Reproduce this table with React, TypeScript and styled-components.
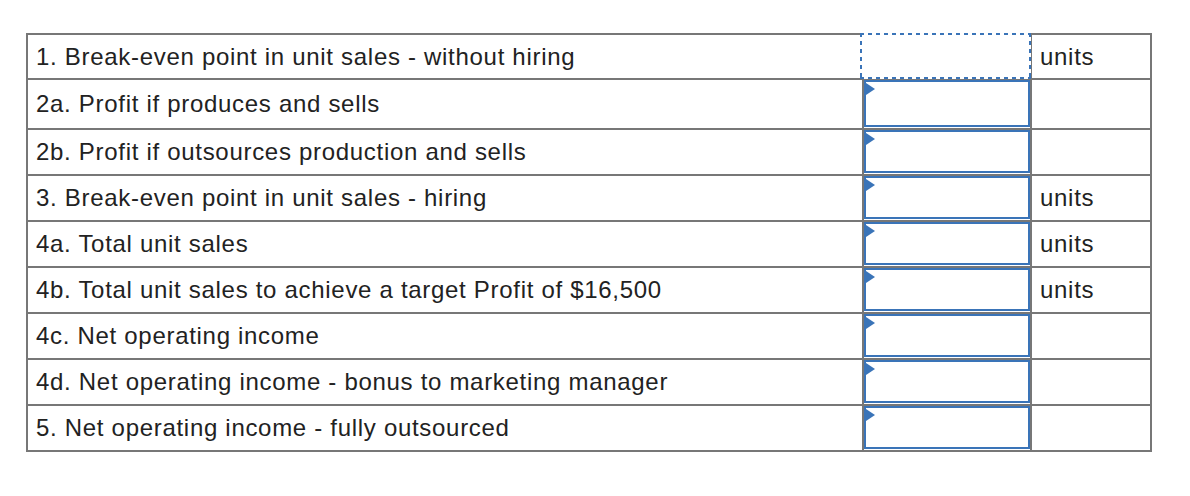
import styled, { createGlobalStyle } from 'styled-components';

const GlobalStyle = createGlobalStyle`
  body {
    margin: 0;
    background: #fff;
    font-family: "Liberation Sans", Arial, sans-serif;
  }
`;

const GRID = '#777777';
const BLUE = '#3a74b8';

interface Row {
  label: string;
  unit?: string;
  height: number; // inner height of the row, without the divider
  focused?: boolean;
}

const rows: Row[] = [
  { label: '1. Break-even point in unit sales - without hiring', unit: 'units', height: 43, focused: true },
  { label: '2a. Profit if produces and sells', height: 48 },
  { label: '2b. Profit if outsources production and sells', height: 44 },
  { label: '3. Break-even point in unit sales - hiring', unit: 'units', height: 44 },
  { label: '4a. Total unit sales', unit: 'units', height: 44 },
  { label: '4b. Total unit sales to achieve a target Profit of $16,500', unit: 'units', height: 44 },
  { label: '4c. Net operating income', height: 44 },
  { label: '4d. Net operating income - bonus to marketing manager', height: 44 },
  { label: '5. Net operating income - fully outsourced', height: 44 },
];

const Page = styled.div`
  padding: 33px 0 0 26px;
`;

const Table = styled.table`
  border-collapse: separate;
  border-spacing: 0;
  border: 2px solid ${GRID};
  table-layout: fixed;
  width: 1126px;
`;

const TR = styled.tr<{ $h: number; $last: boolean }>`
  height: ${({ $h, $last }) => ($last ? $h : $h + 2)}px;

  &:not(:last-child) td {
    border-bottom: 2px solid ${GRID};
  }
`;

const LabelCell = styled.td`
  width: 826px;
  padding: 0 0 0 8px;
  border-right: 2px solid ${GRID};
  font-size: 24px;
  letter-spacing: 0.7px;
  color: #222;
  white-space: nowrap;
  vertical-align: middle;
`;

const InputCell = styled.td`
  width: 166px;
  padding: 0;
  border-right: 2px solid ${GRID};
  vertical-align: top;
`;

const UnitCell = styled.td`
  padding: 0 0 0 8px;
  font-size: 24px;
  letter-spacing: 0.7px;
  color: #222;
  vertical-align: middle;
`;

const AnswerBox = styled.div<{ $h: number }>`
  position: relative;
  box-sizing: border-box;
  height: ${({ $h }) => $h - 1}px;
  border: 2px solid ${BLUE};
  background: #fff;

  &::before {
    content: '';
    position: absolute;
    left: 0;
    top: 1px;
    border-style: solid;
    border-width: 6.5px 0 6.5px 9px;
    border-color: transparent transparent transparent ${BLUE};
  }
`;

const dashX = `repeating-linear-gradient(90deg, ${BLUE} 0 4px, transparent 4px 8px)`;
const dashY = `repeating-linear-gradient(180deg, ${BLUE} 0 4px, transparent 4px 8px)`;

const FocusBox = styled.div<{ $h: number }>`
  box-sizing: border-box;
  height: ${({ $h }) => $h + 3}px;
  margin: -2px -1px -1px -4px;
  position: relative;
  background:
    ${dashX} left top / 100% 2px no-repeat,
    ${dashX} left bottom / 100% 2px no-repeat,
    ${dashY} left top / 2px 100% no-repeat,
    ${dashY} right top / 2px 100% no-repeat,
    #fff;
`;

export default function App() {
  return (
    <Page>
      <GlobalStyle />
      <Table>
        <tbody>
          {rows.map((r, i) => (
            <TR key={r.label} $h={r.height} $last={i === rows.length - 1}>
              <LabelCell>{r.label}</LabelCell>
              <InputCell>
                {r.focused ? <FocusBox $h={r.height} /> : <AnswerBox $h={r.height} />}
              </InputCell>
              <UnitCell>{r.unit}</UnitCell>
            </TR>
          ))}
        </tbody>
      </Table>
    </Page>
  );
}
